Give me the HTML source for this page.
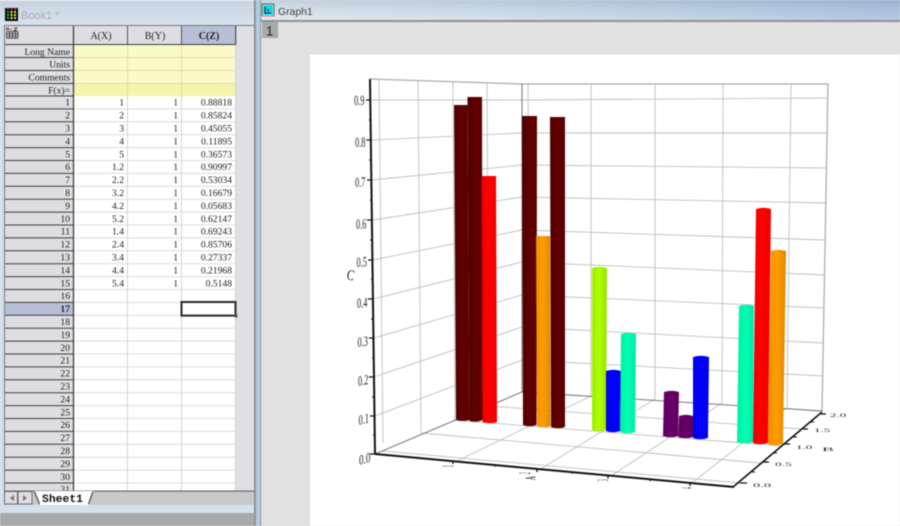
<!DOCTYPE html>
<html><head><meta charset="utf-8"><style>
html,body{margin:0;padding:0;width:900px;height:526px;overflow:hidden;background:#e1e1e1}
svg{display:block;filter:blur(.45px)}
.t text{font-family:"Liberation Serif",serif;font-size:9.6px;fill:#222;text-anchor:end}
.h text{font-family:"Liberation Serif",serif;font-size:10px;fill:#222;text-anchor:middle}
.yl text{font-family:"Liberation Serif",serif;font-size:14px;fill:#222}
.fl text{font-family:"Liberation Serif",serif;font-size:10px;fill:#222}
</style></head><body>
<svg width="900" height="526" viewBox="0 0 900 526" xmlns="http://www.w3.org/2000/svg">
<defs>
<linearGradient id="tb" x1="0" x2="0" y1="0" y2="1"><stop offset="0" stop-color="#c6d2df"/><stop offset="1" stop-color="#d7e3ef"/></linearGradient>
<linearGradient id="gb" x1="0" x2="1" y1="0" y2="0"><stop offset="0" stop-color="#dde5ec"/><stop offset=".35" stop-color="#cfdce9"/><stop offset="1" stop-color="#a6c0dc"/></linearGradient>
<linearGradient id="gv" x1="0" x2="0" y1="0" y2="1"><stop offset="0" stop-color="#5f7fa5" stop-opacity=".2"/><stop offset="1" stop-color="#ffffff" stop-opacity=".15"/></linearGradient>
<linearGradient id="mr" x1="0" x2="1"><stop offset="0" stop-color="#4c0000"/><stop offset=".5" stop-color="#620000"/><stop offset="1" stop-color="#5a0000"/></linearGradient>
<linearGradient id="rd" x1="0" x2="1"><stop offset="0" stop-color="#e80000"/><stop offset=".4" stop-color="#ff0000"/><stop offset="1" stop-color="#f00000"/></linearGradient>
<linearGradient id="or" x1="0" x2="1"><stop offset="0" stop-color="#f09000"/><stop offset=".5" stop-color="#ff9c00"/><stop offset="1" stop-color="#e08800"/></linearGradient>
<linearGradient id="lm" x1="0" x2="1"><stop offset="0" stop-color="#a0ee00"/><stop offset=".5" stop-color="#aeff00"/><stop offset="1" stop-color="#98e000"/></linearGradient>
<linearGradient id="bl" x1="0" x2="1"><stop offset="0" stop-color="#0000e8"/><stop offset=".5" stop-color="#0000ff"/><stop offset="1" stop-color="#0000e8"/></linearGradient>
<linearGradient id="tl" x1="0" x2="1"><stop offset="0" stop-color="#00eea4"/><stop offset=".5" stop-color="#00ffb4"/><stop offset="1" stop-color="#00e8a4"/></linearGradient>
<linearGradient id="pr" x1="0" x2="1"><stop offset="0" stop-color="#5c005c"/><stop offset=".5" stop-color="#6a006a"/><stop offset="1" stop-color="#5c005c"/></linearGradient>
</defs>

<!-- left window -->
<rect x="0" y="0" width="255" height="513" fill="#d3e1ee"/>
<rect x="0" y="0" width="255" height="25" fill="url(#tb)"/>
<rect x="0" y="0" width="255" height="1" fill="#e8eef4"/>
<rect x="4" y="25" width="250" height="480" fill="#dfdfe4"/>
<rect x="4" y="25" width="250" height="1" fill="#777"/>
<rect x="0" y="513" width="255" height="13" fill="#a9a9a9"/>
<rect x="0" y="505" width="255" height="8" fill="#d3e1ee"/>
<!-- strip between windows -->
<rect x="254" y="0" width="2" height="526" fill="#8f9399"/>
<rect x="256" y="0" width="4" height="526" fill="#b4cde6"/>
<rect x="260" y="0" width="1" height="526" fill="#8f9399"/>

<!-- book icon -->
<g>
<rect x="5" y="8" width="13" height="13" fill="#0a0a0a"/>
<path d="M7 8.3h1.6v1.6H7zM10.7 8.3h1.6v1.6h-1.6zM14.4 8.3H16v1.6h-1.6z" fill="#e03050"/>
<path d="M7 11h2v2H7zM7 14h2v2H7zM7 17h2v2H7z" fill="#20c020"/>
<path d="M10.5 11h2v2h-2zM10.5 14h2v2h-2zM10.5 17h2v2h-2zM14 11h2v2h-2zM14 14h2v2h-2zM14 17h2v2h-2z" fill="#e8ee50"/>
</g>
<text x="21" y="19" font-family="Liberation Sans,sans-serif" font-size="11px" fill="#a9adb2">Book1 *</text>

<!-- table fills -->
<rect x="4" y="26" width="69" height="465" fill="#dedee2"/>
<rect x="74" y="26" width="162" height="19" fill="#dedee2"/>
<rect x="182" y="26" width="54" height="19" fill="#b6bfd6"/>
<rect x="74" y="45" width="162" height="39" fill="#fafac6"/>
<rect x="74" y="84" width="162" height="12" fill="#f5f5ac"/>
<rect x="74" y="96" width="162" height="395" fill="#fff"/>
<rect x="4" y="302.4" width="69" height="12.9" fill="#b6bfd6"/>

<!-- data grid -->
<path d="M74 108.9H236M74 121.8H236M74 134.7H236M74 147.6H236M74 160.5H236M74 173.4H236M74 186.3H236M74 199.2H236M74 212.1H236M74 225H236M74 237.9H236M74 250.8H236M74 263.7H236M74 276.6H236M74 289.5H236M74 302.4H236M74 315.3H236M74 328.2H236M74 341.1H236M74 354H236M74 366.9H236M74 379.8H236M74 392.7H236M74 405.6H236M74 418.5H236M74 431.4H236M74 444.3H236M74 457.2H236M74 470.1H236M74 483H236" stroke="#dcdcdc" stroke-width="1" fill="none"/>
<path d="M127.5 96V491M181.5 96V491M235.5 45V491" stroke="#d4d4d4" stroke-width="1" fill="none"/>
<path d="M127.5 45V96M181.5 45V96M74 57.5H236M74 70.5H236M74 83.5H236" stroke="#dcdcb4" stroke-width="1" fill="none"/>
<!-- header grid -->
<path d="M4 44.5H236M4 57.5H73M4 70.5H73M4 83.5H73M4 96H73M4 108.9H73M4 121.8H73M4 134.7H73M4 147.6H73M4 160.5H73M4 173.4H73M4 186.3H73M4 199.2H73M4 212.1H73M4 225H73M4 237.9H73M4 250.8H73M4 263.7H73M4 276.6H73M4 289.5H73M4 302.4H73M4 315.3H73M4 328.2H73M4 341.1H73M4 354H73M4 366.9H73M4 379.8H73M4 392.7H73M4 405.6H73M4 418.5H73M4 431.4H73M4 444.3H73M4 457.2H73M4 470.1H73M4 483H73" stroke="#3c3c3c" stroke-width="1" fill="none"/>
<path d="M73.5 26V491" stroke="#333" stroke-width="1.2"/>
<path d="M4.5 26V491" stroke="#777" stroke-width="1"/>
<path d="M127.5 26V44M181.5 26V44" stroke="#555" stroke-width="1"/>
<path d="M235.7 26V44" stroke="#333" stroke-width="1"/>
<!-- corner icon -->
<path d="M6.5 31.5H18M6.5 33.7H18M6.5 36H18M6.5 38.2H18M6.5 31.5V38.2M9.5 31.5V38.2M12.5 31.5V38.2M15.5 31.5V38.2M18 31.5V38.2" stroke="#333" stroke-width=".8" fill="none"/>
<path d="M6.5 30.5V28h2.2V30.5M6.5 29.3h2.2M10 29.3h2M14 28h3l-3 2.5h3" stroke="#333" stroke-width=".7" fill="none"/>

<g class="h">
<text x="101" y="39">A(X)</text>
<text x="155" y="39">B(Y)</text>
<text x="209" y="39" font-weight="bold">C(Z)</text>
</g>

<g class="t">
<text x="70" y="55">Long Name</text>
<text x="70" y="67.5">Units</text>
<text x="70" y="80.5">Comments</text>
<text x="70" y="93.5">F(x)=</text>
<text x="70" y="105.7">1</text><text x="70" y="118.6">2</text><text x="70" y="131.5">3</text><text x="70" y="144.4">4</text><text x="70" y="157.3">5</text><text x="70" y="170.2">6</text><text x="70" y="183.1">7</text><text x="70" y="196">8</text><text x="70" y="208.9">9</text><text x="70" y="221.8">10</text><text x="70" y="234.7">11</text><text x="70" y="247.6">12</text><text x="70" y="260.5">13</text><text x="70" y="273.4">14</text><text x="70" y="286.3">15</text><text x="70" y="299.2">16</text><text x="70" y="312.1" font-weight="bold">17</text><text x="70" y="325">18</text><text x="70" y="337.9">19</text><text x="70" y="350.8">20</text><text x="70" y="363.7">21</text><text x="70" y="376.6">22</text><text x="70" y="389.5">23</text><text x="70" y="402.4">24</text><text x="70" y="415.3">25</text><text x="70" y="428.2">26</text><text x="70" y="441.1">27</text><text x="70" y="454">28</text><text x="70" y="466.9">29</text><text x="70" y="479.8">30</text><text x="70" y="492.7">31</text>
<text x="124" y="105.7">1</text><text x="124" y="118.6">2</text><text x="124" y="131.5">3</text><text x="124" y="144.4">4</text><text x="124" y="157.3">5</text><text x="124" y="170.2">1.2</text><text x="124" y="183.1">2.2</text><text x="124" y="196">3.2</text><text x="124" y="208.9">4.2</text><text x="124" y="221.8">5.2</text><text x="124" y="234.7">1.4</text><text x="124" y="247.6">2.4</text><text x="124" y="260.5">3.4</text><text x="124" y="273.4">4.4</text><text x="124" y="286.3">5.4</text>
<text x="178" y="105.7">1</text><text x="178" y="118.6">1</text><text x="178" y="131.5">1</text><text x="178" y="144.4">1</text><text x="178" y="157.3">1</text><text x="178" y="170.2">1</text><text x="178" y="183.1">1</text><text x="178" y="196">1</text><text x="178" y="208.9">1</text><text x="178" y="221.8">1</text><text x="178" y="234.7">1</text><text x="178" y="247.6">1</text><text x="178" y="260.5">1</text><text x="178" y="273.4">1</text><text x="178" y="286.3">1</text>
<text x="232" y="105.7">0.88818</text><text x="232" y="118.6">0.85824</text><text x="232" y="131.5">0.45055</text><text x="232" y="144.4">0.11895</text><text x="232" y="157.3">0.36573</text><text x="232" y="170.2">0.90997</text><text x="232" y="183.1">0.53034</text><text x="232" y="196">0.16679</text><text x="232" y="208.9">0.05683</text><text x="232" y="221.8">0.62147</text><text x="232" y="234.7">0.69243</text><text x="232" y="247.6">0.85706</text><text x="232" y="260.5">0.27337</text><text x="232" y="273.4">0.21968</text><text x="232" y="286.3">0.5148</text>
</g>

<!-- selection -->
<rect x="181.5" y="302" width="54" height="13.6" fill="#fff" stroke="#2a2a2a" stroke-width="2"/>
<rect x="234.5" y="314.5" width="3" height="3" fill="#555"/>

<!-- tab bar -->
<rect x="4" y="491" width="250" height="14" fill="#c9c9c9"/>
<rect x="4" y="490.5" width="250" height="1.2" fill="#6a6a6a"/>
<rect x="4.5" y="491.5" width="13" height="12.5" fill="#dedee2" stroke="#555" stroke-width=".8"/>
<rect x="18" y="491.5" width="14" height="12.5" fill="#dedee2" stroke="#555" stroke-width=".8"/>
<path d="M14 495v6l-4-3z" fill="#777"/><path d="M23 495v6l4-3z" fill="#777"/>
<path d="M34 491H94L88 505H40z" fill="#fff"/>
<path d="M34.5 491.5L39.5 504M93 491.5L88.5 504" stroke="#222" stroke-width="1" fill="none"/>
<text x="42" y="502" font-family="Liberation Mono,monospace" font-size="11.4px" font-weight="bold" fill="#111">Sheet1</text>

<!-- graph window -->
<rect x="261" y="0" width="639" height="20" fill="url(#gb)"/>
<rect x="261" y="0" width="639" height="20" fill="url(#gv)"/>
<rect x="261" y="20" width="639" height="2" fill="#8d9196"/>
<rect x="261" y="22" width="639" height="504" fill="#e1e1e1"/>
<rect x="310" y="54.5" width="590" height="472" fill="#fff"/>
<rect x="262" y="22" width="16" height="16" fill="#a9a9a9"/>
<text x="266" y="35.5" font-family="Liberation Sans,sans-serif" font-size="13px" fill="#222">1</text>
<rect x="262" y="4" width="12" height="12" fill="#fff" stroke="#333" stroke-width=".8"/>
<rect x="263" y="5" width="10" height="10" fill="#10d8d8"/>
<path d="M265 7v6h6M267 9l2 2" stroke="#1a1a6a" stroke-width="1" fill="none"/>
<path d="M262 16h12" stroke="#e060a0" stroke-width="1"/>
<text x="278" y="15" font-family="Liberation Sans,sans-serif" font-size="10.4px" fill="#444">Graph1</text>

<!-- chart: walls -->
<g fill="none" stroke="#bfbfbf" stroke-width=".9">
<path d="M372 100L522 100L827 98M372 140L522 133L827 133M372 180L522 165L826 168M373 220L522 197L826 203M373 260L522 230L825 240M373 299L522 262L825 275M374 338L522 295L824 308M374 377L522 327L823 343M375 416L522 360L823 376"/>
<path d="M379 80L383 443M418 81L421 433M453 82L455 420M487 83L489 406M528 84L530 392M591 84L591 396M655 84L655 399M723 84L722 403M791 84L787 408"/>
<path d="M421 433L761 463M453 420L782 446M489 406L801 429M383 451L740 483"/>
<path d="M455 462L591 396M539 470L655 399M611 476L722 403M692 483L787 408"/>
</g>
<g fill="none" stroke="#a8a8a8" stroke-width="1.2">
<path d="M370 79L522 84L828 84L822 411"/>
</g>
<path d="M522 84V392" stroke="#666" stroke-width=".9"/>
<path d="M375 454L522 392L822 411" fill="none" stroke="#666" stroke-width=".9"/>

<!-- bars -->
<path d="M454 105H467.5L469.5 420Q463 422 456 420Z" fill="url(#mr)"/>
<path d="M467.5 97H482L482.5 420Q476 423 469.5 421Z" fill="url(#mr)"/>
<path d="M481.5 176H496L497 422Q490 424.5 482.5 422Z" fill="url(#rd)"/>
<path d="M522 116H537L536.5 425Q530 427.5 523 425Z" fill="url(#mr)"/>
<path d="M536 236H550L550.5 426Q544 428.5 537 426Z" fill="url(#or)"/>
<path d="M550 117H565L565 427Q558 429.5 551 427Z" fill="url(#mr)"/>
<path d="M592 268Q599.5 265.5 607 268L606 430Q599 432.5 592 430Z" fill="url(#lm)"/>
<path d="M606 371Q613.5 368.5 621 371L620 431Q613 433.5 606 431Z" fill="url(#bl)"/>
<path d="M621 334Q628.5 331.5 636 334L635 432Q628 434.5 620 432Z" fill="url(#tl)"/>
<path d="M664 392Q671.5 389.5 679 392L678 436Q671 438.5 663 436Z" fill="url(#pr)"/>
<path d="M679 416Q686 413.5 693 416L693 437Q686 439.5 678 437Z" fill="url(#pr)"/>
<path d="M693 357Q701 354.5 709 357L708 438Q700 440.5 693 438Z" fill="url(#bl)"/>
<path d="M739 306Q746.5 303.5 754 306L753 442Q745 444.5 737 442Z" fill="url(#tl)"/>
<path d="M756 209Q763.5 206.5 771 209L768 443Q760 445.5 753 443Z" fill="url(#rd)"/>
<path d="M771 251Q778.5 248.5 786 251L783 444Q775 446.5 768 444Z" fill="url(#or)"/>

<!-- axes -->
<g fill="none" stroke="#111">
<path d="M370 79L375 454" stroke-width="2"/>
<path d="M375 454L734 487" stroke-width="2"/>
<path d="M733 487L822 412" stroke-width="1.6"/>
<path d="M366 100H371M366.5 140H371M367 180H372M367 220H372M368 260H373M368 299H373M369 338H374M369 377H374M370 416H375M370 454H375" stroke-width="1.2"/>
<path d="M369 80H371M369 120H371M369 160H372M370 200H372M370 240H373M371 279H373M371 319H374M372 358H374M372 397H375M373 435H375" stroke-width=".9"/>
<path d="M453 461.5V464M537 469V472M608 476V478.5M690 483.5V486" stroke-width="1.3"/>
<path d="M495 465.5V467M572 472.5V474M650 480V481.5" stroke-width=".8"/>
<path d="M740 483H747M763 462H769M783 444H790M803 429H808M821 414H826" stroke-width="1.3"/>
<path d="M752 472H755M773 453H777M793 437H797M811 422H814" stroke-width="1"/>
</g>

<!-- y labels -->
<g class="yl">
<text transform="translate(354,105) skewY(-1) scale(.6,1)">0.9</text>
<text transform="translate(355,147) skewY(-2) scale(.6,1)">0.8</text>
<text transform="translate(355,187) skewY(-3) scale(.6,1)">0.7</text>
<text transform="translate(356,229) skewY(-4) scale(.6,1)">0.6</text>
<text transform="translate(356.5,267) skewY(-5) scale(.6,1)">0.5</text>
<text transform="translate(357,308) skewY(-7) scale(.6,1)">0.4</text>
<text transform="translate(357.5,347) skewY(-9) scale(.6,1)">0.3</text>
<text transform="translate(358,386) skewY(-11) scale(.6,1)">0.2</text>
<text transform="translate(358.5,425) skewY(-13) scale(.6,1)">0.1</text>
<text transform="translate(359,465) skewY(-16) scale(.65,1)">0.0</text>
<text transform="translate(346,279) rotate(12) scale(.8,1.05)" font-size="14">C</text>
</g>

<!-- flat labels -->
<g class="fl">
<text transform="translate(453,467) scale(1.6,.35) rotate(-90)">1</text>
<text transform="translate(530,474) scale(1.6,.35) rotate(-90)">2</text>
<text transform="translate(608,481) scale(1.6,.35) rotate(-90)">3</text>
<text transform="translate(692,489) scale(1.6,.35) rotate(-90)">4</text>
<text transform="translate(535,480) scale(1.5,.5) rotate(-90)" font-weight="bold">A</text>
<text transform="translate(753,487) scale(1.45,.55)">0.0</text>
<text transform="translate(775,466) scale(1.35,.55)">0.5</text>
<text transform="translate(796,449) scale(1.3,.55)">1.0</text>
<text transform="translate(814,432) scale(1.3,.5)">1.5</text>
<text transform="translate(830,417) scale(1.3,.5)">2.0</text>
<text transform="translate(822,451) scale(1.8,.55)">B</text>
</g>
</svg>
</body></html>
